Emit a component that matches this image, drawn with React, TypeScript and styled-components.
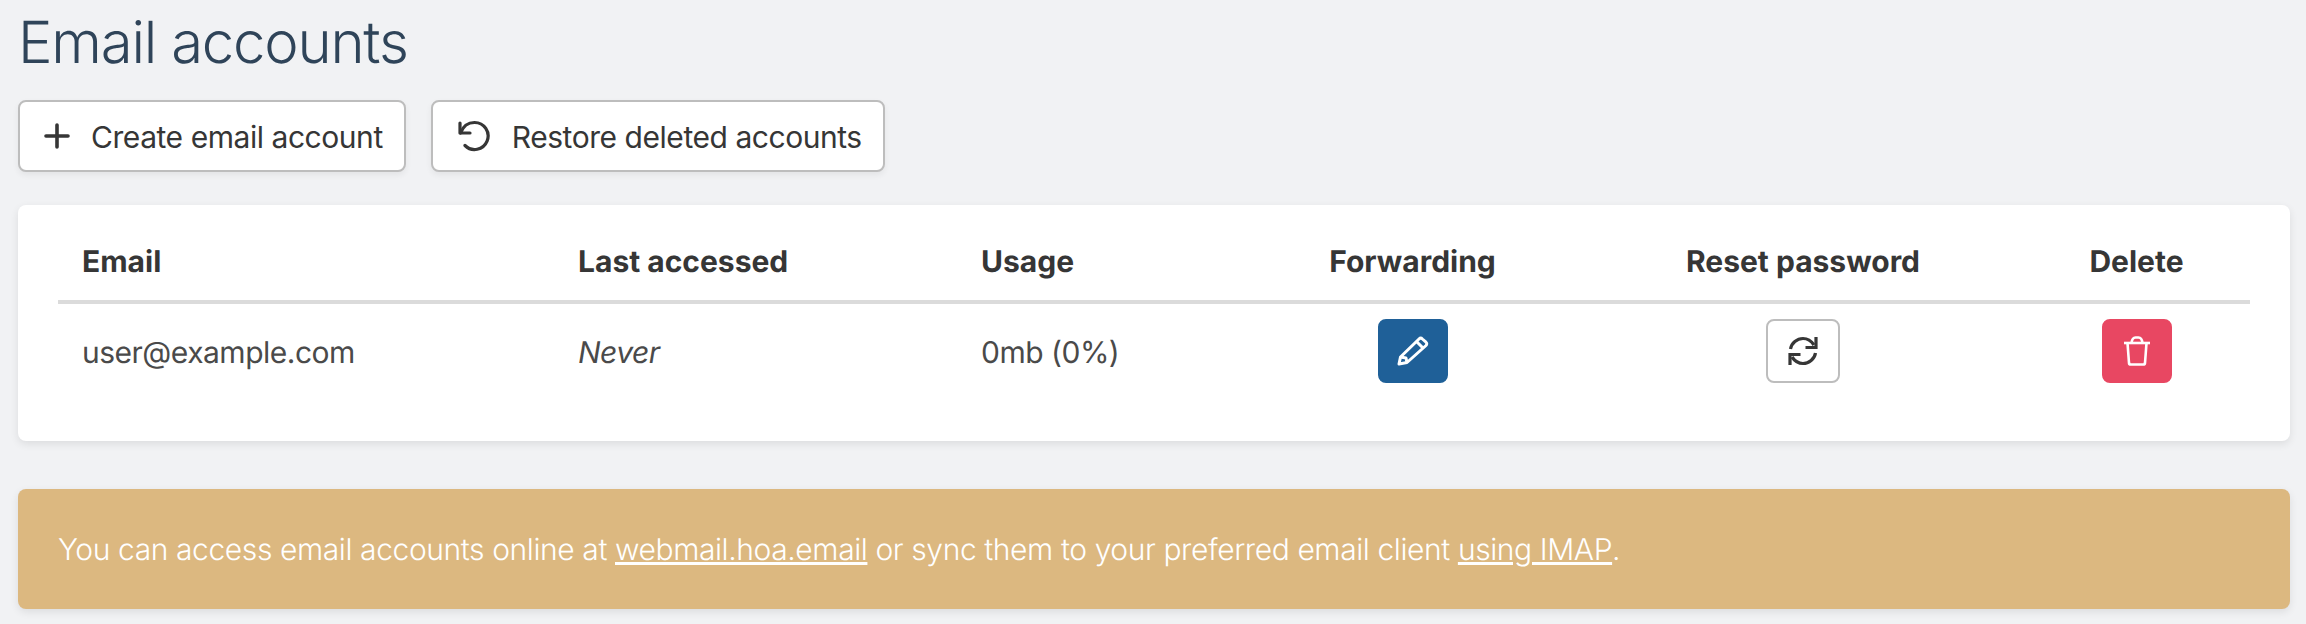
import React from "react";
import styled, { createGlobalStyle } from "styled-components";

const Global = createGlobalStyle`
  html, body { margin: 0; padding: 0; background: #f1f2f4; }
  body { font-family: Inter, "Liberation Sans", sans-serif; color: #363636; font-size: 30px; text-rendering: geometricPrecision; }
`;
const Page = styled.main`
  padding: 0 16px 0 18px;
  height: 624px;
  box-sizing: border-box;
  overflow: hidden;
`;
const Title = styled.h1`
  margin: 0;
  padding-top: 6px;
  height: 100px;
  box-sizing: border-box;
  font-size: 58px;
  line-height: 72px;
  font-weight: 300;
  letter-spacing: -1.2px;
  color: #2f4459;
`;
const Toolbar = styled.div`
  display: flex;
  gap: 25px;
`;
const ToolButton = styled.button`
  display: flex;
  align-items: center;
  height: 72px;
  box-sizing: border-box;
  padding: 2px 21px 0 24px;
  gap: 21px;
  background: #fff;
  border: 2px solid #bdbdbd;
  border-radius: 8px;
  box-shadow: 0 3px 6px rgba(0, 0, 0, 0.06);
  font: inherit;
  letter-spacing: -0.45px;
  color: #363636;
  white-space: nowrap;
`;
const IconSlot = styled.span<{ $w: number }>`
  display: flex;
  width: ${(p) => p.$w}px;
  margin-top: -2px;
`;
const Card = styled.section`
  margin-top: 33px;
  height: 236px;
  box-sizing: border-box;
  padding: 24px 40px 0;
  background: #fff;
  border-radius: 8px;
  box-shadow: 0 3px 9px rgba(0, 0, 0, 0.09);
`;
const Table = styled.table`
  width: 100%;
  border-collapse: collapse;
  table-layout: fixed;
`;
const HeadCell = styled.th<{ $center?: boolean }>`
  height: 73px;
  box-sizing: border-box;
  padding: 0 0 5px ${(p) => (p.$center ? 0 : 24)}px;
  border-bottom: 4px solid #dbdbdb;
  text-align: ${(p) => (p.$center ? "center" : "left")};
  font-weight: 700;
  font-size: 30px;
  color: #363636;
`;
const Cell = styled.td<{ $center?: boolean; $italic?: boolean }>`
  height: 96px;
  box-sizing: border-box;
  padding: ${(p) => (p.$center ? "0" : "3px 0 0 24px")};
  text-align: ${(p) => (p.$center ? "center" : "left")};
  font-style: ${(p) => (p.$italic ? "italic" : "normal")};
  letter-spacing: -0.5px;
  color: #4a4a4a;
`;
const ActionButton = styled.button<{ $bg: string; $border: string; $w: number }>`
  display: inline-flex;
  align-items: center;
  justify-content: center;
  vertical-align: middle;
  width: ${(p) => p.$w}px;
  height: 64px;
  padding: 0;
  box-sizing: border-box;
  background: ${(p) => p.$bg};
  border: 2px solid ${(p) => p.$border};
  border-radius: 8px;
  color: ${(p) => (p.$bg === "#fff" ? "#363636" : "#fff")};
`;
const Notice = styled.aside`
  margin-top: 48px;
  height: 120px;
  box-sizing: border-box;
  display: flex;
  align-items: center;
  padding: 1px 40px 0;
  background: #dcb880;
  border-radius: 8px;
  box-shadow: 0 3px 9px rgba(0, 0, 0, 0.09);
  color: #fff;
  font-weight: 300;
  letter-spacing: -0.4px;
  white-space: pre;
`;
const NoticeLink = styled.a`
  color: #fff;
  text-decoration: underline;
`;

const columns = [496, 403, 285, 341, 440, 227];

const Plus = () => (
  <svg width="26" height="26" viewBox="0 0 26 26" fill="none" stroke="currentColor" strokeWidth="3.6" strokeLinecap="round">
    <path d="M13 2v22M2 13h22" />
  </svg>
);
const Undo = () => (
  <svg width="34" height="34" viewBox="0 0 34 34" fill="none" stroke="currentColor" strokeWidth="3.2" strokeLinecap="round" strokeLinejoin="round">
    <path d="M3 4v10h10" />
    <path d="M3.500 14C6 7.500 11 3.500 17.500 3.500a13.500 13.500 0 1 1-9.500 23" />
  </svg>
);
const Pencil = () => (
  <svg width="32" height="30" viewBox="0 0 32 30" fill="none" stroke="currentColor" strokeWidth="3" strokeLinejoin="round">
    <path d="M2 28l1.500-7L22 3c1-1 2.400-1 3.400 0l3.600 3.200c1 1 1 2.300 0 3.300L10 26.500z" />
    <path d="M19.500 5.500l6.500 6.500M3.500 21l5.500 1 1 4.500" />
  </svg>
);
const Sync = () => (
  <svg width="32" height="30" viewBox="0 0 32 30" fill="none" stroke="currentColor" strokeWidth="3.2">
    <path d="M3.500 13C4.500 7 10 2.500 16 2.500c4.500 0 8 2 11 6.500" />
    <path d="M28.500 17c-1 6-6.500 10.500-12.500 10.500-4.500 0-8-2-11-6.500" />
    <path d="M29 1v10.500H18.500M3 29V18.500h10.500" />
  </svg>
);
const Trash = () => (
  <svg width="28" height="30" viewBox="0 0 28 30" fill="none" stroke="currentColor" strokeWidth="2.6" strokeLinejoin="round">
    <path d="M1 7h26" />
    <path d="M4.500 7l1.500 20c.1 1 .7 1.500 1.700 1.500h12.600c1 0 1.600-.5 1.700-1.500L23.500 7" />
    <path d="M8.500 7C9 3 10.500 1.500 12.500 1.500h3c2 0 3.500 1.500 4 5.500" />
  </svg>
);

export default function App() {
  return (
    <>
      <Global />
      <Page>
        <Title>Email accounts</Title>
        <Toolbar>
          <ToolButton><IconSlot $w={26}><Plus /></IconSlot>Create email account</ToolButton>
          <ToolButton><IconSlot $w={34}><Undo /></IconSlot>Restore deleted accounts</ToolButton>
        </Toolbar>
        <Card>
          <Table>
            <colgroup>
              {columns.map((w) => (
                <col key={w} style={{ width: w }} />
              ))}
            </colgroup>
            <thead>
              <tr>
                <HeadCell>Email</HeadCell>
                <HeadCell>Last accessed</HeadCell>
                <HeadCell>Usage</HeadCell>
                <HeadCell $center>Forwarding</HeadCell>
                <HeadCell $center>Reset password</HeadCell>
                <HeadCell $center>Delete</HeadCell>
              </tr>
            </thead>
            <tbody>
              <tr>
                <Cell>user@example.com</Cell>
                <Cell $italic>Never</Cell>
                <Cell>0mb (0%)</Cell>
                <Cell $center>
                  <ActionButton $bg="#1f6098" $border="#1f6098" $w={70}><Pencil /></ActionButton>
                </Cell>
                <Cell $center>
                  <ActionButton $bg="#fff" $border="#bdbdbd" $w={74}><Sync /></ActionButton>
                </Cell>
                <Cell $center>
                  <ActionButton $bg="#e84762" $border="#e84762" $w={70}><Trash /></ActionButton>
                </Cell>
              </tr>
            </tbody>
          </Table>
        </Card>
        <Notice>
          You can access email accounts online at <NoticeLink>webmail.hoa.email</NoticeLink> or sync them to your preferred email client <NoticeLink>using IMAP</NoticeLink>.
        </Notice>
      </Page>
    </>
  );
}
